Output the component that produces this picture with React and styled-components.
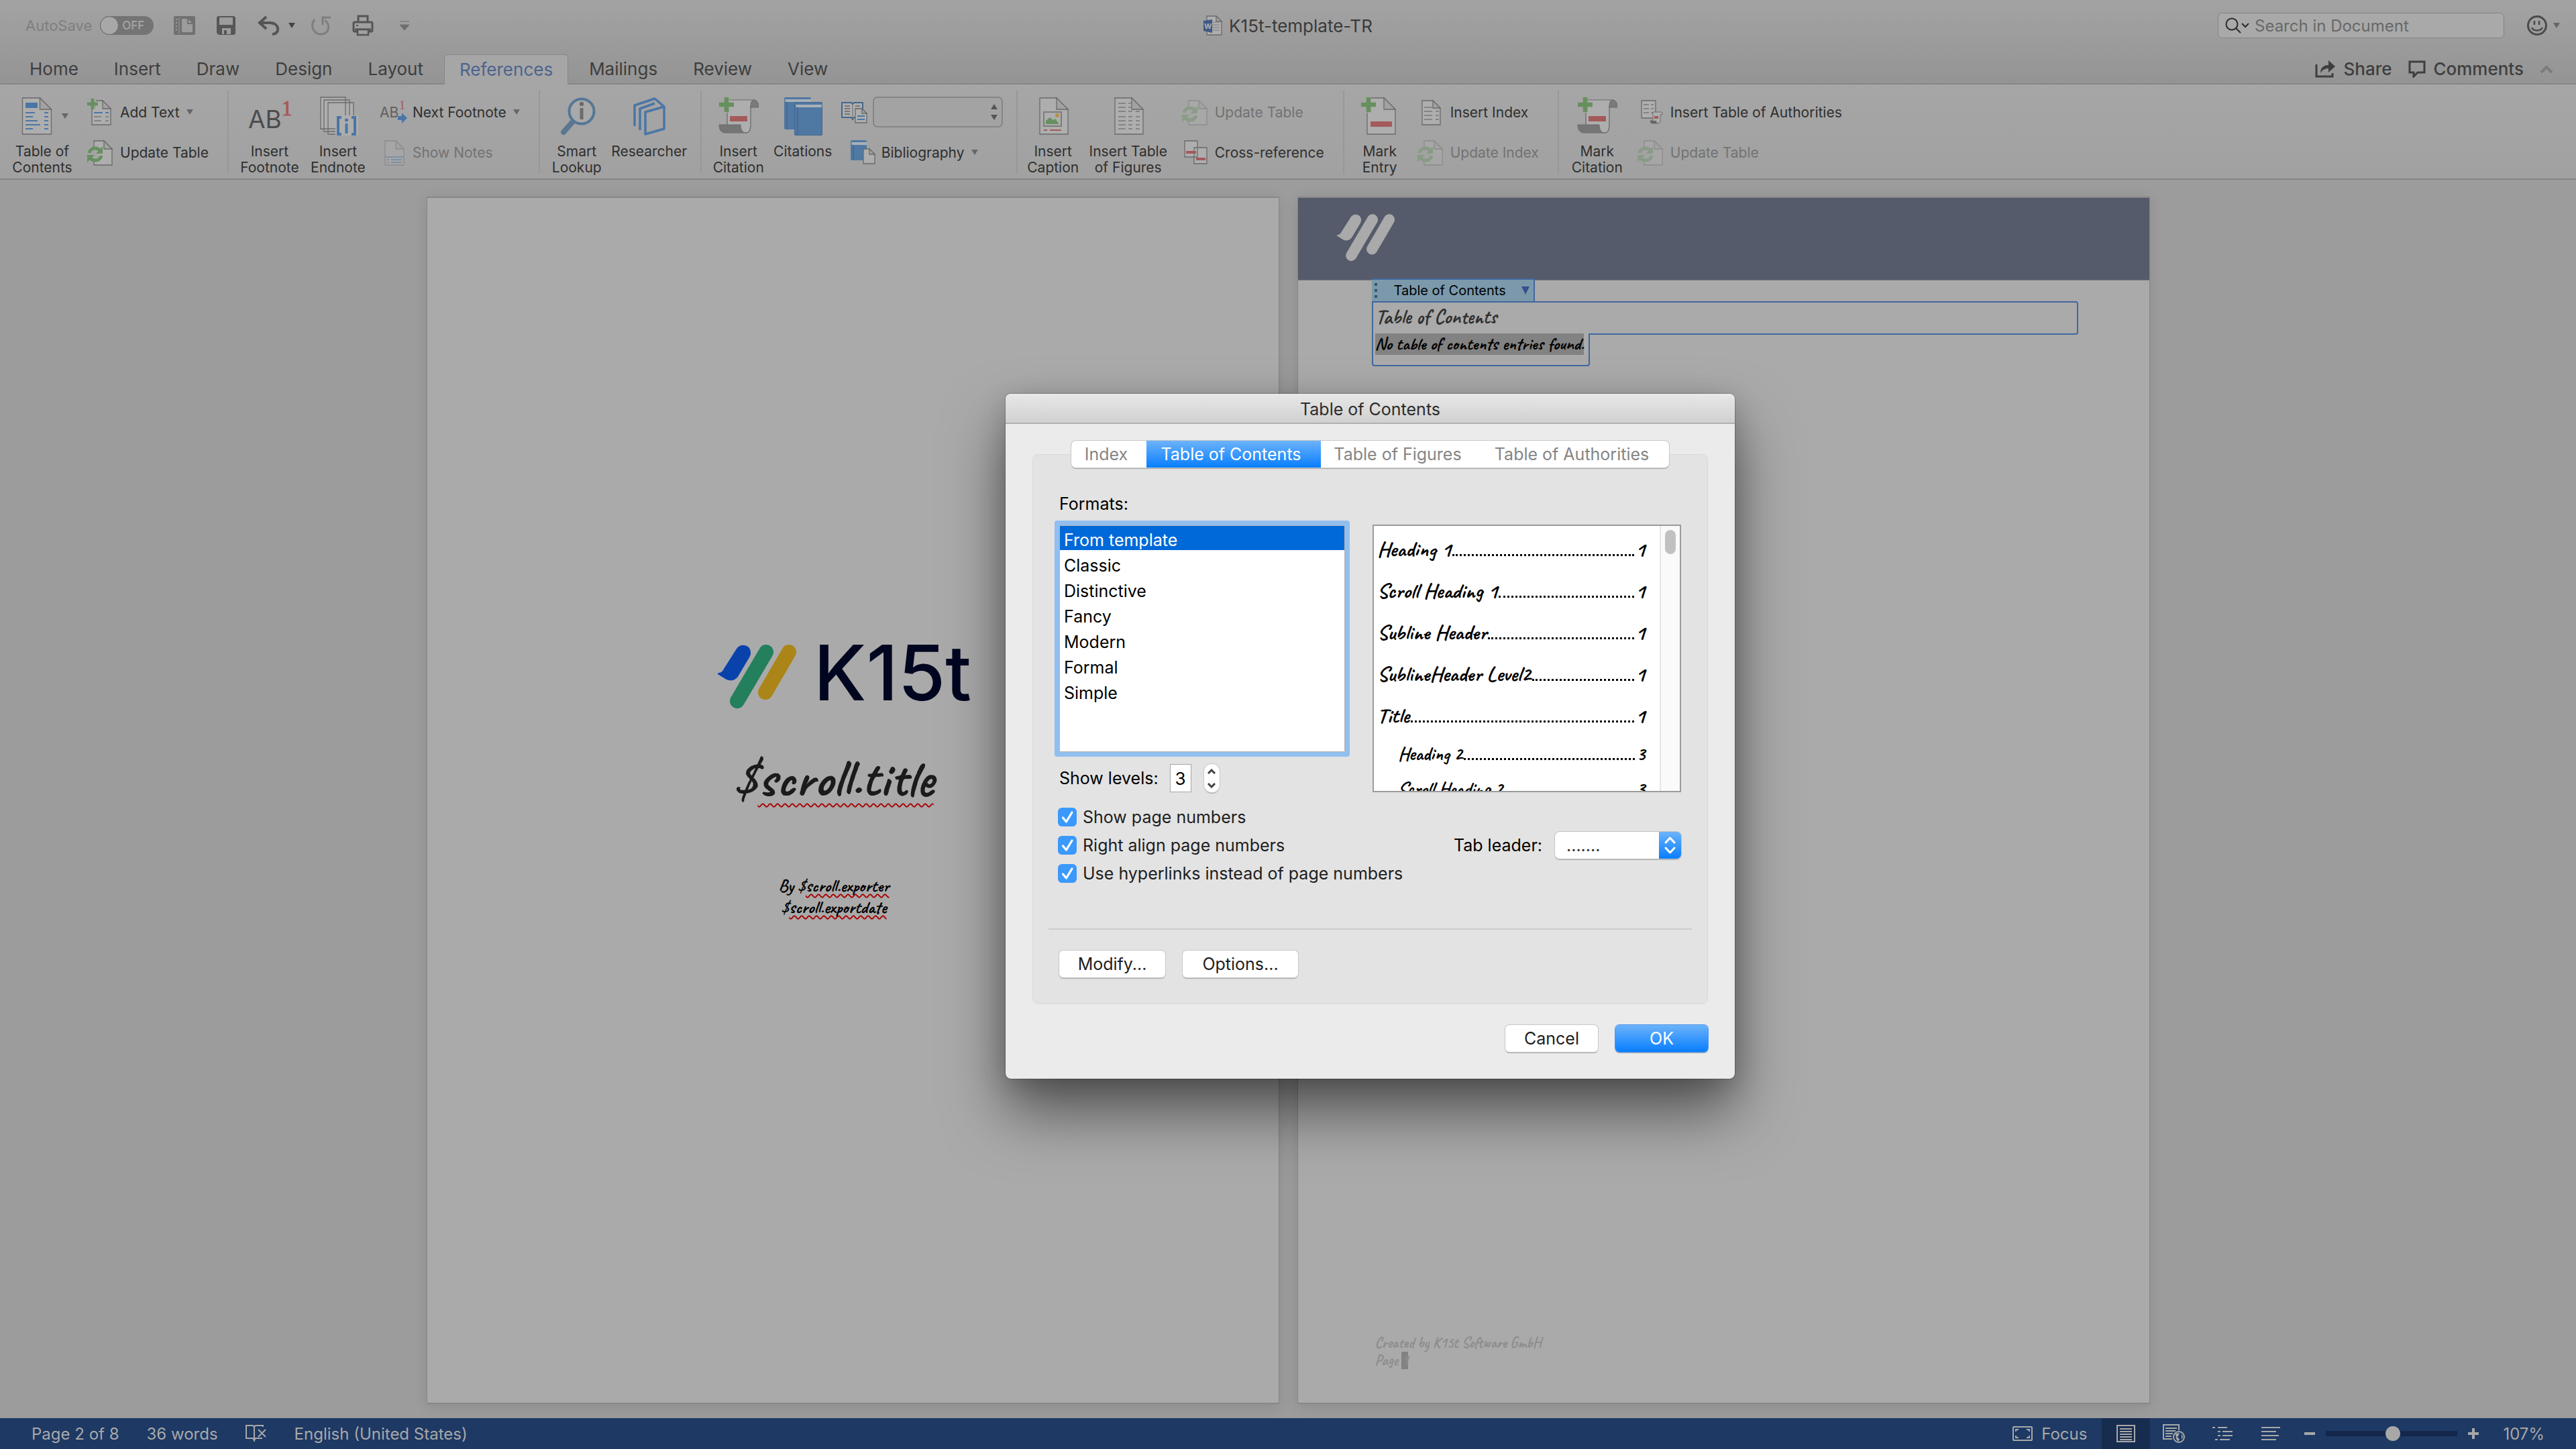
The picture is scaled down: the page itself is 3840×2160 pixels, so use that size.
import React, { useState } from "react";
import styled, { createGlobalStyle, css } from "styled-components";

const UI = `"Inter", "Liberation Sans", sans-serif`;
const SCRIPT = `"Caveat", "Liberation Sans Narrow", "Lato", sans-serif`;

const BLUE = "#4a76a6";
const GREEN = "#66905f";
const RED = "#a45a5a";
const LINE = "#6a6a6a";
const PAPER = "#aeaeae";

const GlobalStyle = createGlobalStyle`
  *, *::before, *::after {
    box-sizing: border-box;
  }
  body {
    margin: 0;
    background: #9c9c9c;
    font-family: ${UI};
    color: #333333;
  }
  button, input, select {
    font-family: inherit;
    font-size: inherit;
    color: inherit;
    margin: 0;
  }
  button {
    border: 0;
    padding: 0;
    background: none;
  }
  svg {
    display: block;
    flex: none;
  }
  ul, h1, h2, p {
    margin: 0;
    padding: 0;
    list-style: none;
    font-size: inherit;
    font-weight: inherit;
  }
`;

const Window = styled.div`
  position: relative;
  min-height: 100vh;
  display: flex;
  flex-direction: column;
  overflow: hidden;
`;

//---------------- title bar ----------------

const Chrome = styled.header`
  background: linear-gradient(#a3a3a3, #949494);
`;

const TitleBar = styled.div`
  height: 81px;
  padding: 0 24px 5px;
  display: grid;
  grid-template-columns: 1fr auto 1fr;
  align-items: center;
`;

const QuickAccess = styled.div`
  padding-left: 14px;
  display: flex;
  align-items: center;
  gap: 30px;
  color: #555555;
  button {
    display: flex;
  }
`;

const AutoSave = styled.div`
  display: flex;
  align-items: center;
  gap: 12px;
  font-size: 22px;
  color: #7f7f7f;
`;

const Toggle = styled.button`
  width: 80px;
  height: 28px;
  border-radius: 14px;
  background: #747474;
  align-items: center;
  gap: 5px;
  font-size: 17px;
  font-weight: 500;
  color: #a6a6a6;
  &::before {
    content: "";
    width: 28px;
    height: 28px;
    border-radius: 50%;
    background: #a8a8a8;
    border: 1px solid #6c6c6c;
  }
`;

const UndoButton = styled.button`
  margin-right: -8px;
`;

const DocTitle = styled.h1`
  display: flex;
  align-items: center;
  gap: 10px;
  font-size: 26px;
  color: #3a3a3a;
`;

const TitleTools = styled.div`
  display: flex;
  justify-content: flex-end;
  align-items: center;
  gap: 33px;
  color: #4a4a4a;
`;

const SearchBox = styled.label`
  width: 427px;
  height: 38px;
  padding: 0 10px;
  display: flex;
  align-items: center;
  gap: 8px;
  border: 1px solid #848484;
  border-radius: 6px;
  background: #a9a9a9;
  font-size: 24px;
  input {
    flex: 1;
    min-width: 0;
    border: 0;
    padding: 0;
    outline: 0;
    background: none;
  }
  input::placeholder {
    color: #686868;
    opacity: 1;
  }
`;

const TabRow = styled.nav`
  height: 45px;
  padding: 0 34px 0 22px;
  display: flex;
  align-items: stretch;
  gap: 9px;
  font-size: 26px;
  box-shadow: inset 0 -2px #868686;
`;

const RibbonTab = styled.button`
  padding: 0 22px 2px;
  color: #3e3e3e;
  ${p =>
    p.$active &&
    css`
      color: #4d648f;
      background: #a6a6a6;
      border: 1px solid #868686;
      border-bottom: 0;
      border-radius: 5px 5px 0 0;
    `}
`;

const TabTools = styled.div`
  margin-left: auto;
  display: flex;
  align-items: center;
  gap: 24px;
  padding-bottom: 2px;
  color: #3e3e3e;
  button {
    display: flex;
    align-items: center;
    gap: 12px;
    font-weight: 500;
  }
`;

//---------------- ribbon ----------------

const RibbonBar = styled.div`
  height: 142px;
  padding: 9px 0 7px;
  display: flex;
  background: linear-gradient(#a6a6a6, #a1a1a1);
  border-bottom: 2px solid #868686;
  font-size: 21px;
  line-height: 24px;
`;

const Group = styled.div`
  display: flex;
  padding: 0 ${p => p.$right || 0}px 0 ${p => p.$left || 18}px;
  gap: ${p => p.$gap || 15}px;
  border-right: ${p => (p.$last ? 0 : 2)}px solid #989898;
`;

const BigButton = styled.button`
  width: ${p => p.$width}px;
  padding-top: 9px;
  display: flex;
  flex-direction: column;
  align-items: center;
  justify-content: flex-start;
  gap: 12px;
  line-height: 24px;
  text-align: center;
  white-space: pre-line;
  color: #2f2f2f;
`;

const Stack = styled.div`
  padding: 12px 0;
  margin-left: ${p => p.$indent || 0}px;
  display: flex;
  flex-direction: column;
  align-items: flex-start;
  gap: 20px;
`;

const SmallButton = styled.button`
  height: 40px;
  margin-left: ${p => p.$indent || 0}px;
  display: flex;
  align-items: center;
  gap: 10px;
  white-space: nowrap;
  color: ${p => (p.disabled ? "#727272" : "#2f2f2f")};
  > svg:first-child {
    opacity: ${p => (p.disabled ? 0.4 : 1)};
  }
`;

const StyleRow = styled.div`
  height: 40px;
  display: flex;
  align-items: center;
  gap: 8px;
`;

const StyleSelect = styled.select`
  width: 194px;
  height: 46px;
  appearance: none;
  border: 2px solid #868686;
  border-radius: 7px;
  background: url("data:image/svg+xml,%3Csvg xmlns='http://www.w3.org/2000/svg' width='12' height='26'%3E%3Cpath d='M6 1l5 8H1zM6 25l5-8H1z' fill='%23555'/%3E%3C/svg%3E")
    no-repeat right 5px center #a3a3a3;
`;

//---------------- document ----------------

const Canvas = styled.main`
  flex: 1;
  padding: 25px 24px 21px;
  display: flex;
  justify-content: center;
  gap: 27px;
  background: #9c9c9c;
`;

const Page = styled.section`
  flex: 0 1 1271px;
  display: flex;
  flex-direction: column;
  background: #aaaaaa;
  border: 2px solid #878787;
  border-width: 2px 1px;
  box-shadow: 0 4px 18px rgba(0, 0, 0, 0.1);
  font-family: ${SCRIPT};
  font-weight: 600;
`;

const Cover = styled.div`
  padding: 648px 56px 0 0;
  display: flex;
  flex-direction: column;
  align-items: center;
  color: #000000;
`;

const Brand = styled.div`
  display: flex;
  align-items: flex-start;
  gap: 26px;
  height: 120px;
  padding-left: 32px;
  font-family: ${UI};
  font-weight: 500;
  font-size: 114px;
  line-height: 120px;
  color: #000620;
  svg {
    margin-top: 18px;
  }
`;

const CoverTitle = styled.h2`
  margin-top: 57px;
  font-size: 78px;
  font-weight: 700;
  line-height: 80px;
  color: #1b1b1b;
`;

const CoverMeta = styled.p`
  margin-top: 105px;
  font-size: 26px;
  line-height: 32px;
  text-align: center;
`;

const Misspelled = styled.span`
  text-decoration: underline wavy #a80000 2px;
  text-underline-offset: ${p => p.$offset || 3}px;
  text-decoration-skip-ink: none;
`;

const PageHeader = styled.div`
  height: 123px;
  padding: 24px 58px;
  background: #555b6b;
  border-bottom: 1px solid #70747f;
`;

const PageBody = styled.div`
  flex: 1;
  padding: 0 106px 0 110px;
  margin-top: -3px;
`;

const FieldTag = styled.button`
  height: 34px;
  padding: 0 6px 0 4px;
  display: flex;
  align-items: center;
  gap: 23px;
  border-top: 2px solid #41679f;
  border-right: 2px solid #41679f;
  border-radius: 0 3px 0 0;
  background: #7b99ab;
  font-family: ${UI};
  font-size: 20px;
  color: #000000;
`;

const FieldTop = styled.div`
  height: 50px;
  padding: 0 4px;
  border: 2px solid #41679f;
  border-radius: 0 4px 4px 0;
  font-size: 30px;
  line-height: 42px;
  color: #303030;
`;

const FieldBottom = styled.div`
  width: 325px;
  height: 49px;
  margin-top: -2px;
  padding: 0 3px;
  border: 2px solid #41679f;
  border-top: 0;
  border-radius: 0 0 4px 4px;
  background: #aaaaaa;
  font-size: 26px;
  line-height: 32px;
  white-space: nowrap;
  color: #000000;
`;

const Selected = styled.span`
  display: inline-block;
  background: #828282;
`;

const PageFooter = styled.footer`
  padding: 0 115px 50px;
  font-size: 22px;
  line-height: 26px;
  color: #8d8d8d;
`;

//---------------- status bar ----------------

const StatusBar = styled.footer`
  height: 46px;
  padding: 0 47px;
  display: flex;
  align-items: center;
  gap: 41px;
  background: #1d3964;
  font-size: 24px;
  color: #a8a8a8;
`;

const StatusRight = styled.div`
  margin-left: auto;
  display: flex;
  align-items: center;
  align-self: stretch;
  > button {
    display: flex;
    align-items: center;
    gap: 13px;
  }
`;

const ViewButtons = styled.div`
  align-self: stretch;
  display: flex;
  margin: 0 14px 0 22px;
`;

const ViewButton = styled.button`
  width: 72px;
  display: flex;
  align-items: center;
  justify-content: center;
  background: ${p => (p.$active ? "#172d50" : "none")};
`;

const ZoomSlider = styled.input`
  width: 196px;
  height: 22px;
  margin: 0 16px;
  appearance: none;
  background: linear-gradient(#14274a, #14274a) center / 100% 8px no-repeat;
  &::-webkit-slider-thumb {
    appearance: none;
    width: 22px;
    height: 22px;
    border-radius: 50%;
    background: #a8a8a8;
  }
`;

const ZoomValue = styled.span`
  margin-left: 36px;
`;

//---------------- dialog ----------------

const Dialog = styled.section`
  position: absolute;
  top: 587px;
  left: calc(50% - 421px);
  width: 1087px;
  background: #ebebeb;
  border-radius: 8px;
  font-size: 25px;
  line-height: 30px;
  color: #000000;
  box-shadow: 0 0 2px rgba(0, 0, 0, 0.6), 0 50px 90px rgba(0, 0, 0, 0.5),
    0 10px 40px rgba(0, 0, 0, 0.18);
`;

const DialogTitle = styled.h2`
  height: 45px;
  line-height: 47px;
  text-align: center;
  color: #2c2c2c;
  border-radius: 8px 8px 0 0;
  border-bottom: 2px solid #b2b2b2;
  background: linear-gradient(#e8e8e8, #d0d0d0);
`;

const DialogBody = styled.div`
  padding: 25px 40px 40px;
`;

const Segments = styled.div`
  position: relative;
  width: 891px;
  height: 40px;
  margin: 0 auto -20px;
  display: grid;
  grid-template-columns: 112px 260px 237px 1fr;
  border-radius: 7px;
  background: #ffffff;
  box-shadow: 0 0 0 1px #c6c6c6, 0 2px 1px #a8a8a8;
`;

const Segment = styled.button`
  padding-right: 8px;
  color: ${p => (p.$active ? "#ffffff" : "#858585")};
  background: ${p => (p.$active ? "linear-gradient(#6cb3fa, #087eff)" : "none")};
  & + & {
    border-left: ${p => (p.$active ? 0 : 2)}px solid #e2e2e2;
  }
`;

const Panel = styled.div`
  height: 820px;
  padding: 58px 23px 38px;
  display: flex;
  flex-direction: column;
  background: #e3e3e3;
  border: 1px solid #dadada;
  border-radius: 8px;
`;

const Columns = styled.div`
  padding: 0 16px;
  display: flex;
  justify-content: space-between;
`;

const FormatList = styled.ul`
  width: 426px;
  height: 338px;
  margin-top: 17px;
  border: 1px solid #b4b4b4;
  background: #ffffff;
  box-shadow: 0 0 0 7px #91bfef;
  border-radius: 1px;
`;

const FormatItem = styled.li`
  height: ${p => (p.$active ? 36 : 38)}px;
  padding: ${p => (p.$active ? 6 : 8)}px 6px 0;
  color: ${p => (p.$active ? "#ffffff" : "#000000")};
  background: ${p => (p.$active ? "#0069d9" : "none")};
`;

const Preview = styled.div`
  width: 460px;
  height: 399px;
  margin-top: 46px;
  display: flex;
  border: 2px solid #9b9b9b;
  background: #ffffff;
  overflow: hidden;
`;

const PreviewLines = styled.div`
  flex: 1;
  padding: 4px 22px 0 5px;
  font-family: ${SCRIPT};
  font-weight: 600;
`;

const PreviewLine = styled.div`
  display: flex;
  align-items: baseline;
  gap: 2px;
  padding-left: ${p => (p.$level - 1) * 31}px;
  font-size: ${p => (p.$level === 1 ? 32 : 28)}px;
  line-height: ${p => (p.$level === 1 ? 62 : 52)}px;
  &::before {
    content: "";
    order: 1;
    flex: 1;
    border-bottom: 3px dotted #000000;
  }
  span:last-child {
    order: 2;
  }
`;

const PreviewScroll = styled.div`
  width: 30px;
  padding: 6px;
  border-left: 2px solid #e6e6e6;
  background: #fafafa;
  &::before {
    content: "";
    display: block;
    width: 16px;
    height: 36px;
    border-radius: 8px;
    background: #c1c1c1;
  }
`;

const LevelRow = styled.div`
  margin-top: 18px;
  display: flex;
  align-items: center;
`;

const LevelInput = styled.input`
  width: 32px;
  height: 42px;
  margin: 0 19px 0 17px;
  padding: 0;
  border: 1px solid #a6a6a6;
  background: #ffffff;
  text-align: center;
  font-size: 26px;
`;

const Stepper = styled.div`
  width: 23px;
  height: 42px;
  border-radius: 11px;
  background: #ffffff;
  box-shadow: 0 0 0 1px #c8c8c8, 0 2px 1px #b0b0b0;
  display: grid;
  place-items: center;
  color: #444444;
  button {
    display: flex;
  }
`;

const Settings = styled.div`
  padding: 0 16px 0 14px;
  margin-top: 22px;
  display: flex;
  justify-content: space-between;
  align-items: center;
`;

const Checks = styled.div`
  display: flex;
  flex-direction: column;
  gap: 12px;
`;

const Check = styled.label`
  display: flex;
  align-items: center;
  gap: 9px;
  color: #1e1e1e;
  input {
    width: 28px;
    height: 28px;
    margin: 1px 0;
    appearance: none;
    border-radius: 6px;
    background: #ffffff;
  }
  input:checked {
    background: url("data:image/svg+xml,%3Csvg xmlns='http://www.w3.org/2000/svg' viewBox='0 0 28 28'%3E%3Cpath d='M7.500 15l5 6L21 7' fill='none' stroke='%23fff' stroke-width='3.200' stroke-linecap='round' stroke-linejoin='round'/%3E%3C/svg%3E")
      #3b99fc;
  }
`;

const Leader = styled.label`
  display: flex;
  align-items: center;
  gap: 19px;
  select {
    width: 188px;
    height: 40px;
    padding: 0 17px;
    appearance: none;
    border: 0;
    border-radius: 7px;
    color: #222222;
    background: url("data:image/svg+xml,%3Csvg xmlns='http://www.w3.org/2000/svg' width='33' height='40'%3E%3Cpath d='M10 16l6.500-7 6.500 7M10 24l6.500 7 6.500-7' fill='none' stroke='%23fff' stroke-width='3' stroke-linecap='round' stroke-linejoin='round'/%3E%3C/svg%3E")
        right center no-repeat,
      linear-gradient(#6cb3fa, #087eff) right / 33px 100% no-repeat, #ffffff;
    box-shadow: 0 0 0 1px #c4c4c4, 0 2px 1px #a8a8a8;
  }
`;

const Divider = styled.hr`
  width: 100%;
  height: 2px;
  margin: 67px 0 31px;
  border: 0;
  flex: none;
  background: #cccccc;
`;

const ButtonRow = styled.div`
  display: flex;
  gap: 26px;
  padding: 0 16px;
  ${p =>
    p.$end &&
    css`
      justify-content: flex-end;
      padding: 0;
      margin-top: 31px;
    `}
`;

const PushButton = styled.button`
  width: ${p => p.$width}px;
  height: 40px;
  border-radius: 6px;
  color: ${p => (p.$primary ? "#ffffff" : "#1e1e1e")};
  background: ${p => (p.$primary ? "linear-gradient(#6cb3fa, #087eff)" : "#ffffff")};
  box-shadow: 0 0 0 1px ${p => (p.$primary ? "#4a94ee" : "#c8c8c8")}, 0 2px 1px #a8a8a8;
`;

//---------------- icons ----------------

const Triangle = ({ color = "#666666" }) => (
  <svg width="10" height="8" viewBox="0 0 10 8">
    <path d="M0 0h10L5 8z" fill={color} />
  </svg>
);

// sheet of paper with the top right corner folded
const Sheet = ({ x, y, w, h, fold }) => (
  <g fill={PAPER} stroke={LINE} strokeWidth="1.300">
    <path d={`M${x} ${y}h${w - fold}l${fold} ${fold}v${h - fold}h${-w}z`} />
    <path d={`M${x + w - fold} ${y}v${fold}h${fold}z`} fill="#a2a2a2" />
  </g>
);

const Plus = ({ s = 22, x = 1, y = 1 }) => {
  const t = s * 0.3;
  const o = (s - t) / 2;
  return (
    <path
      d={`M${x + o} ${y}h${t}v${o}h${o}v${t}h${-o}v${o}h${-t}v${-o}h${-o}v${-t}h${o}z`}
      fill={GREEN}
    />
  );
};

const Rows = ({ ys, cols, color = BLUE, w = 2 }) => (
  <path
    d={ys.map(y => cols.map(([a, b]) => `M${a} ${y}H${b}`).join("")).join("")}
    stroke={color}
    strokeWidth={w}
    fill="none"
  />
);

const Big = ({ w = 60, children }) => (
  <svg width={w} height="58" viewBox={`0 0 ${w} 58`}>
    {children}
  </svg>
);

const Small = ({ children }) => (
  <svg width="40" height="40" viewBox="0 0 40 40" overflow="visible">
    {children}
  </svg>
);

const TocIcon = () => (
  <Big w={78}>
    <Sheet x={9.5} y={2} w={43} h={54} fold={17} />
    <path d="M14 9h18v8H14z" fill={BLUE} />
    <path
      d="M14 24h14M14 30h11M14 36h18M14 42h22M14 48h11M42 24h6M42 30h6M42 36h6M42 42h6M42 48h6"
      stroke={BLUE}
      strokeWidth="2"
    />
    <path d="M68 25h10l-5 8z" fill="#666666" />
  </Big>
);

const FootnoteIcon = () => (
  <Big w={66}>
    <text x="1" y="47" fontFamily="Inter" fontSize="37" fill="#4c4c4c">
      AB
    </text>
    <text x="51" y="28" fontFamily="Liberation Serif" fontSize="31" fill={RED} stroke={RED}>
      1
    </text>
  </Big>
);

const EndnoteIcon = () => (
  <Big>
    <g fill={PAPER} stroke={LINE} strokeWidth="1.300">
      <path d="M4 1h37v47H4zM9 5h38v47H9zM15 9h38v47H15z" />
    </g>
    <path d="M26 28h34v30H26z" fill={PAPER} />
    <path
      d="M35 31h-5v25h5M50 31h5v25h-5M42.500 40v15"
      fill="none"
      stroke={BLUE}
      strokeWidth="4"
    />
    <circle cx="42.500" cy="35" r="2.500" fill={BLUE} />
  </Big>
);

const LookupIcon = () => (
  <Big>
    <path d="M25 36L10 53" stroke="#5b7690" strokeWidth="8" strokeLinecap="round" />
    <circle cx="37" cy="22" r="18.500" fill="#a9a9a9" stroke="#547797" strokeWidth="4" />
    <circle cx="37" cy="11" r="3.200" fill="#6c6c6c" />
    <path d="M37 17v17" stroke="#6c6c6c" strokeWidth="5" />
  </Big>
);

const ResearchIcon = () => (
  <Big>
    <path
      d="M8 44V13L38 3l14 12v33L24 56V23l28-8M16 50V18l22-8"
      fill="none"
      stroke={BLUE}
      strokeWidth="3.500"
      strokeLinejoin="round"
    />
  </Big>
);

const ScrollIcon = () => (
  <Big>
    <path d="M13 42V5h36v37c0 8-2 12-6 12H8l5-12z" fill={PAPER} />
    <path d="M16 5h37c5 0 7 5 7 11H48c0-6 1-11 5-11" fill="#7a7a7a" stroke={LINE} />
    <path d="M13 24v18M48 14v28c0 7-2 12-7 12" fill="none" stroke={LINE} strokeWidth="1.300" />
    <path d="M1 42h32c0 6 2 12 8 12H10C4 54 1 49 1 42z" fill="#757575" stroke={LINE} />
    <path d="M17 29h26v8H17z" fill={RED} />
    <path d="M0 0h16v24H0z" fill="#a5a5a5" />
    <Plus />
  </Big>
);

const Book = ({ x, y, w, h }) => (
  <g>
    <rect x={x} y={y} width={w} height={h} rx="2" fill="#4f78a3" />
    <path d={`M${x + 1} ${y + 3}h${w - 1}v4h${-w + 2}z`} fill="#a9b0b8" />
    <path d={`M${x + 4} ${y + 7}v${h - 7}`} stroke="#41678f" strokeWidth="1.500" />
  </g>
);

const CitationsIcon = () => (
  <Big>
    <Book x={2} y={1} w={40} h={48} />
    <rect x="17" y="8" width="42" height="50" rx="2" fill="#41678f" />
    <Book x={18} y={9} w={40} h={48} />
  </Big>
);

const CaptionIcon = () => (
  <Big>
    <Sheet x={10} y={2} w={42} h={54} fold={17} />
    <rect x="16" y="23" width="26" height="21" fill={PAPER} stroke="#7c7c7c" strokeWidth="2" />
    <path d="M19 41v-5l6-5 5 4 3-2 6 8z" fill={GREEN} />
    <circle cx="36" cy="28" r="3" fill="#b0914a" />
    <path d="M16 50h5M25 50h17" stroke={RED} strokeWidth="2" />
  </Big>
);

const FiguresIcon = () => (
  <Big>
    <Sheet x={10} y={2} w={42} h={54} fold={17} />
    <Rows ys={[10, 16]} cols={[[15, 26], [30, 35]]} color="#858585" />
    <Rows ys={[22, 30, 36, 42, 48]} cols={[[15, 26], [30, 36], [41, 47]]} color="#858585" />
  </Big>
);

const MarkEntryIcon = () => (
  <Big>
    <Sheet x={11} y={2} w={42} h={54} fold={17} />
    <path d="M16 37h32v8H16z" fill={RED} />
    <path d="M0 0h17v24H0z" fill="#a5a5a5" />
    <Plus x={2} />
  </Big>
);

const AddTextIcon = () => (
  <Small>
    <Sheet x={8} y={3} w={28} h={36} fold={12} />
    <Rows ys={[21]} cols={[[11, 24], [28, 33]]} />
    <Rows ys={[27, 33]} cols={[[11, 22], [28, 33]]} color="#858585" />
    <path d="M0 -1h14v17H0z" fill="#a5a5a5" />
    <Plus s={16} x={1} y={0} />
  </Small>
);

const UpdateIcon = () => (
  <Small>
    <Sheet x={11} y={3} w={27} h={36} fold={12} />
    <path d="M2 12h16v22H2z" fill="#a5a5a5" />
    <g fill="none" stroke={GREEN} strokeWidth="5">
      <path d="M4 21c2-8 11-9 16-4" />
      <path d="M22 25c-2 8-11 9-16 4" />
    </g>
    <path d="M24 11v11H14zM1 35V24h11z" fill={GREEN} />
  </Small>
);

const NextFootnoteIcon = () => (
  <Small>
    <text x="1" y="28" fontFamily="Inter" fontSize="21" fill="#5f5f5f">
      AB
    </text>
    <text x="30" y="16" fontFamily="Liberation Serif" fontSize="18" fill={RED}>
      1
    </text>
    <path d="M28 26h6v-5l8 8-8 8v-5h-6z" fill={BLUE} />
  </Small>
);

const NotesIcon = () => (
  <Small>
    <Sheet x={9} y={3} w={28} h={36} fold={12} />
    <path d="M9 27h28M12 31h3M12 35h3M18 31h16M18 35h16" stroke={BLUE} strokeWidth="2" />
  </Small>
);

const StyleIcon = () => (
  <svg width="39" height="34" viewBox="0 0 39 34">
    <path d="M1 3h14l2 2 2-2h13v22H19l-2 3-2-3H1z" fill={PAPER} stroke="#42688f" strokeWidth="2" />
    <path d="M17 5v22" stroke={LINE} />
    <Rows ys={[8, 12, 16, 20]} cols={[[5, 13], [21, 28]]} color="#777777" />
    <Sheet x={21} y={12} w={17} h={21} fold={7} />
    <Rows ys={[23, 28]} cols={[[24, 35]]} />
  </svg>
);

const BibliographyIcon = () => (
  <Small>
    <Book x={4} y={2} w={24} h={30} />
    <Sheet x={23} y={15} w={17} h={22} fold={8} />
  </Small>
);

const CrossRefIcon = () => (
  <Small>
    <path
      d="M5 3h19v24H5zM19 13h19v24H19z"
      fill={PAPER}
      stroke={LINE}
      strokeWidth="1.300"
    />
    <path d="M7 18h15v4H7zM22 28h14v4H22z" fill={RED} />
  </Small>
);

const IndexIcon = () => (
  <Small>
    <Sheet x={8} y={3} w={27} h={36} fold={11} />
    <Rows ys={[13, 19, 25, 31]} cols={[[11, 23]]} color="#858585" />
    <Rows ys={[19, 25, 31]} cols={[[28, 33]]} color="#858585" />
  </Small>
);

const AuthoritiesIcon = () => (
  <Small>
    <path d="M7 3h21v26H7z" fill={PAPER} stroke={LINE} strokeWidth="1.300" />
    <Rows ys={[9, 15, 21]} cols={[[10, 18], [21, 25]]} color="#858585" />
    <path d="M24 20h12c2 0 2 2 2 4h-3v8c0 3-1 5-4 5h-8c-2 0-3-2-3-4h4z" fill={PAPER} stroke={LINE} />
    <path d="M20 33h9c0 2 1 4 3 4h-9c-2 0-3-2-3-4z" fill="#666666" />
    <path d="M26 26h6v4h-6z" fill={RED} />
  </Small>
);

const BarsMark = ({ w, h, colors }) => (
  <svg width={w} height={h} viewBox="0 0 117 96">
    <g strokeWidth="22" strokeLinecap="round">
      <path d="M72 11L29 84" stroke={colors[1]} />
      <path d="M106 11L71 71" stroke={colors[2]} />
    </g>
    <path
      d="M28 6C34-3 50 0 49 13c0 2-1 4-2 6L31 46c-4 7-11 9-18 6L0 44v-2c5 0 7-2 9-6z"
      fill={colors[0]}
    />
  </svg>
);

const icon = { fill: "none", stroke: "currentColor", strokeWidth: 3 };

//---------------- sections ----------------

const TopBar = () => (
  <TitleBar>
    <QuickAccess>
      <AutoSave>
        <span>AutoSave</span>
        <Toggle role="switch" aria-checked="false" aria-label="AutoSave">
          OFF
        </Toggle>
      </AutoSave>
      <button aria-label="Sidebar">
        <svg width="32" height="28" viewBox="0 0 32 28">
          <rect width="32" height="28" rx="2" fill="#717171" />
          <path d="M4 4v20" stroke="#9c9c9c" strokeWidth="2" strokeDasharray="2 3" />
          <path d="M8 2v24" stroke="#9c9c9c" />
          <path d="M12 4h9l7 7v13H12z" fill="#9c9c9c" />
          <path d="M21 4v7h7" fill="none" stroke="#717171" strokeWidth="2" />
        </svg>
      </button>
      <button aria-label="Save">
        <svg width="32" height="28" viewBox="0 0 32 28">
          <path d="M4 0h24l2 2v24l-2 2H5l-3-3V2z" fill="#565656" />
          <path d="M6 2h20v11H6z" fill="#9c9c9c" />
          <path d="M10 18h13v9H10z" fill="#9c9c9c" />
          <path d="M13 21h4v7h-4z" fill="#565656" />
        </svg>
      </button>
      <UndoButton aria-label="Undo">
        <svg width="58" height="30" viewBox="0 0 58 30">
          <path d="M14 2L4 11l10 9M5 11h15c15 1 14 17 3 17" {...icon} strokeWidth="4" />
          <path d="M47 11h10l-5 8z" fill="#444444" />
        </svg>
      </UndoButton>
      <button aria-label="Redo">
        <svg width="32" height="30" viewBox="0 0 32 30">
          <path d="M6 6C-2 17 6 28 15 28c12 0 16-13 6-21M18 14V3h12" {...icon} stroke="#7f7f7f" />
        </svg>
      </button>
      <button aria-label="Print">
        <svg width="32" height="32" viewBox="0 0 32 32">
          <path d="M9 11V2h14v9" {...icon} />
          <rect x="2" y="11" width="28" height="14" rx="2" {...icon} />
          <path d="M4 22h24" {...icon} />
          <path d="M8 22h16v8H8z" fill="#a0a0a0" stroke="currentColor" strokeWidth="2.500" />
          <path d="M6 16h3" {...icon} strokeWidth="2" />
        </svg>
      </button>
      <button aria-label="Customize toolbar">
        <svg width="32" height="16" viewBox="0 0 32 16">
          <path d="M9 2h14M9 7h14l-7 8z" fill="#6e6e6e" stroke="#6e6e6e" />
        </svg>
      </button>
    </QuickAccess>
    <DocTitle>
      <svg width="28" height="30" viewBox="0 0 28 30">
        <Sheet x={5} y={1} w={22} h={28} fold={8} />
        <Rows ys={[10, 14, 18, 22]} cols={[[13, 24]]} color="#7c7c7c" w={1} />
        <path d="M0 8l13-2v20L0 23z" fill="#3f5985" />
        <text x="1" y="20" fontFamily="Inter" fontSize="11" fontWeight="700" fill="#b0b0b0">
          W
        </text>
      </svg>
      K15t-template-TR
    </DocTitle>
    <TitleTools>
      <SearchBox>
        <svg width="36" height="24" viewBox="0 0 36 24">
          <g fill="none" stroke="#2a2a2a" strokeWidth="2">
            <circle cx="10" cy="10" r="8.500" />
            <path d="M16 16l7 7M25 9l5 5 5-5" />
          </g>
        </svg>
        <input type="search" placeholder="Search in Document" aria-label="Search in Document" />
      </SearchBox>
      <svg width="50" height="32" viewBox="0 0 50 32">
        <circle cx="16" cy="16" r="13.500" {...icon} />
        <path d="M12 9v6M19 9v6M8 19c3 6 13 6 16 0" {...icon} strokeWidth="2.500" />
        <path d="M40 12h10l-5 8z" fill="#666666" />
      </svg>
    </TitleTools>
  </TitleBar>
);

const TABS = [
  "Home",
  "Insert",
  "Draw",
  "Design",
  "Layout",
  "References",
  "Mailings",
  "Review",
  "View"
];

const Tabs = () => (
  <TabRow>
    {TABS.map(tab => (
      <RibbonTab key={tab} $active={tab === "References"}>
        {tab}
      </RibbonTab>
    ))}
    <TabTools>
      <button>
        <svg width="30" height="26" viewBox="0 0 30 26">
          <path d="M2 6v18h24v-5" {...icon} />
          <path d="M8 19C8 10 14 7 20 7V0l10 9-10 9v-6c-5 0-9 2-12 7z" fill="currentColor" />
        </svg>
        Share
      </button>
      <button>
        <svg width="26" height="26" viewBox="0 0 26 26">
          <path d="M2 2h22v16H14l-6 6v-6H2z" {...icon} />
        </svg>
        Comments
      </button>
      <button aria-label="Collapse ribbon">
        <svg width="20" height="14" viewBox="0 0 20 14">
          <path d="M2 12l8-8 8 8" {...icon} stroke="#7c7c7c" strokeWidth="4" />
        </svg>
      </button>
    </TabTools>
  </TabRow>
);

const Ribbon = () => (
  <RibbonBar>
    <Group $gap={21} $right={28}>
      <BigButton $width={90}>
        <TocIcon />
        {"Table of\nContents"}
      </BigButton>
      <Stack>
        <SmallButton>
          <AddTextIcon />
          Add Text
          <Triangle />
        </SmallButton>
        <SmallButton>
          <UpdateIcon />
          Update Table
        </SmallButton>
      </Stack>
    </Group>
    <Group $left={16} $right={28}>
      <BigButton $width={90}>
        <FootnoteIcon />
        {"Insert\nFootnote"}
      </BigButton>
      <BigButton $width={84}>
        <EndnoteIcon />
        {"Insert\nEndnote"}
      </BigButton>
      <Stack $indent={4}>
        <SmallButton>
          <NextFootnoteIcon />
          Next Footnote
          <Triangle />
        </SmallButton>
        <SmallButton disabled>
          <NotesIcon />
          Show Notes
        </SmallButton>
      </Stack>
    </Group>
    <Group $left={18} $right={20}>
      <BigButton $width={74}>
        <LookupIcon />
        {"Smart\nLookup"}
      </BigButton>
      <BigButton $width={112}>
        <ResearchIcon />
        Researcher
      </BigButton>
    </Group>
    <Group $left={16} $gap={12} $right={20}>
      <BigButton $width={78}>
        <ScrollIcon />
        {"Insert\nCitation"}
      </BigButton>
      <BigButton $width={90}>
        <CitationsIcon />
        Citations
      </BigButton>
      <Stack>
        <StyleRow>
          <StyleIcon />
          <StyleSelect aria-label="Bibliography style">
            <option />
          </StyleSelect>
        </StyleRow>
        <SmallButton $indent={10}>
          <BibliographyIcon />
          Bibliography
          <Triangle />
        </SmallButton>
      </Stack>
    </Group>
    <Group $left={14} $gap={13} $right={28}>
      <BigButton $width={78}>
        <CaptionIcon />
        {"Insert\nCaption"}
      </BigButton>
      <BigButton $width={120}>
        <FiguresIcon />
        {"Insert Table\nof Figures"}
      </BigButton>
      <Stack $indent={6}>
        <SmallButton disabled>
          <UpdateIcon />
          Update Table
        </SmallButton>
        <SmallButton>
          <CrossRefIcon />
          Cross-reference
        </SmallButton>
      </Stack>
    </Group>
    <Group $left={16} $gap={18} $right={28}>
      <BigButton $width={74}>
        <MarkEntryIcon />
        {"Mark\nEntry"}
      </BigButton>
      <Stack>
        <SmallButton>
          <IndexIcon />
          Insert Index
        </SmallButton>
        <SmallButton disabled>
          <UpdateIcon />
          Update Index
        </SmallButton>
      </Stack>
    </Group>
    <Group $gap={20} $last>
      <BigButton $width={78}>
        <ScrollIcon />
        {"Mark\nCitation"}
      </BigButton>
      <Stack>
        <SmallButton>
          <AuthoritiesIcon />
          Insert Table of Authorities
        </SmallButton>
        <SmallButton disabled>
          <UpdateIcon />
          Update Table
        </SmallButton>
      </Stack>
    </Group>
  </RibbonBar>
);

const Document = () => (
  <Canvas>
    <Page>
      <Cover>
        <Brand>
          <BarsMark w={117} h={96} colors={["#0a42ac", "#237f5c", "#ab8517"]} />
          K15t
        </Brand>
        <CoverTitle>
          $<Misspelled $offset={11}>scroll.title</Misspelled>
        </CoverTitle>
        <CoverMeta>
          By $<Misspelled>scroll.exporter</Misspelled>
          <br />$<Misspelled>scroll.exportdate</Misspelled>
        </CoverMeta>
      </Cover>
    </Page>
    <Page>
      <PageHeader>
        <BarsMark w={86} h={71} colors={["#aaaaaa", "#aaaaaa", "#aaaaaa"]} />
      </PageHeader>
      <PageBody>
        <FieldTag>
          <svg width="6" height="22" viewBox="0 0 6 22">
            <path d="M2 0v4M2 9v4M2 18v4" stroke="#33566b" strokeWidth="4" />
          </svg>
          Table of Contents
          <svg width="12" height="12" viewBox="0 0 12 12">
            <path d="M0 0h12L6 12z" fill="#34508f" />
          </svg>
        </FieldTag>
        <FieldTop>Table of Contents</FieldTop>
        <FieldBottom>
          <Selected>No table of contents entries found.</Selected>
        </FieldBottom>
      </PageBody>
      <PageFooter>
        <p>Created by K15t Software GmbH</p>
        <p>
          Page <Selected>1</Selected>
        </p>
      </PageFooter>
    </Page>
  </Canvas>
);

const Status = () => (
  <StatusBar>
    <span>Page 2 of 8</span>
    <span>36 words</span>
    <svg width="32" height="28" viewBox="0 0 32 28">
      <path
        d="M26 4V2H15l-2 2-2-2H1v19h10l2 3 2-3h10M13 4v22M19 8l11 11M30 8L19 19"
        fill="none"
        stroke="currentColor"
        strokeWidth="2"
      />
    </svg>
    <span>English (United States)</span>
    <StatusRight>
      <button>
        <svg width="30" height="22" viewBox="0 0 30 22">
          <rect x="1" y="1" width="28" height="20" rx="1" {...icon} strokeWidth="2" />
          <path d="M5 8V5h4M21 5h4v3M25 14v3h-4M9 17H5v-3" {...icon} strokeWidth="2" />
        </svg>
        Focus
      </button>
      <ViewButtons>
        <ViewButton $active aria-label="Print layout">
          <svg width="28" height="26" viewBox="0 0 28 26">
            <rect x="1" y="1" width="26" height="24" {...icon} strokeWidth="2" />
            <path d="M5 6h18M5 10h18M5 14h18M5 18h18M5 22h18" {...icon} strokeWidth="2" />
          </svg>
        </ViewButton>
        <ViewButton aria-label="Web layout">
          <svg width="34" height="28" viewBox="0 0 34 28">
            <path d="M24 9V1H1v21h13M4 6h17M4 10h15M4 14h11M4 18h9" {...icon} strokeWidth="2" />
            <circle cx="24" cy="19" r="8" {...icon} strokeWidth="2" />
            <path d="M19 14l6-1-2 5-2 1 4 3-2 4-3-4zM28 14l2 5-2 4z" fill="currentColor" />
          </svg>
        </ViewButton>
        <ViewButton aria-label="Outline">
          <svg width="30" height="20" viewBox="0 0 30 20">
            <path
              d="M0 1h4M8 1h14M8 7h4M15 7h15M8 13h4M15 13h15M4 19h4M11 19h15"
              {...icon}
              strokeWidth="2"
            />
          </svg>
        </ViewButton>
        <ViewButton aria-label="Draft">
          <svg width="28" height="20" viewBox="0 0 28 20">
            <path d="M0 1h28M0 7h22M0 13h26M0 19h22" {...icon} strokeWidth="2" />
          </svg>
        </ViewButton>
      </ViewButtons>
      <button aria-label="Zoom out">
        <svg width="16" height="16" viewBox="0 0 16 16">
          <path d="M0 8h16" {...icon} strokeWidth="4" />
        </svg>
      </button>
      <ZoomSlider type="range" min="0" max="100" defaultValue="51" aria-label="Zoom" />
      <button aria-label="Zoom in">
        <svg width="16" height="16" viewBox="0 0 16 16">
          <path d="M0 8h16M8 0v16" {...icon} strokeWidth="4" />
        </svg>
      </button>
      <ZoomValue>107%</ZoomValue>
    </StatusRight>
  </StatusBar>
);

const SEGMENTS = ["Index", "Table of Contents", "Table of Figures", "Table of Authorities"];
const FORMATS = ["From template", "Classic", "Distinctive", "Fancy", "Modern", "Formal", "Simple"];
const PREVIEW = [
  ["Heading 1", 1, 1],
  ["Scroll Heading 1", 1, 1],
  ["Subline Header", 1, 1],
  ["SublineHeader Level2", 1, 1],
  ["Title", 1, 1],
  ["Heading 2", 3, 2],
  ["Scroll Heading 2", 3, 2]
];
const OPTIONS = [
  "Show page numbers",
  "Right align page numbers",
  "Use hyperlinks instead of page numbers"
];

const TocDialog = () => {
  const [segment, setSegment] = useState("Table of Contents");
  const [format, setFormat] = useState("From template");
  const [levels, setLevels] = useState(3);

  return (
    <Dialog role="dialog" aria-labelledby="toc-title">
      <DialogTitle id="toc-title">Table of Contents</DialogTitle>
      <DialogBody>
        <Segments role="tablist">
          {SEGMENTS.map(name => (
            <Segment
              key={name}
              role="tab"
              aria-selected={name === segment}
              $active={name === segment}
              onClick={() => setSegment(name)}
            >
              {name}
            </Segment>
          ))}
        </Segments>
        <Panel>
          <Columns>
            <div>
              <div id="formats">Formats:</div>
              <FormatList role="listbox" aria-labelledby="formats">
                {FORMATS.map(name => (
                  <FormatItem
                    key={name}
                    role="option"
                    aria-selected={name === format}
                    $active={name === format}
                    onClick={() => setFormat(name)}
                  >
                    {name}
                  </FormatItem>
                ))}
              </FormatList>
              <LevelRow>
                <label htmlFor="levels">Show levels:</label>
                <LevelInput
                  id="levels"
                  value={levels}
                  onChange={e => setLevels(Number(e.target.value) || 1)}
                />
                <Stepper>
                  <button aria-label="More levels" onClick={() => setLevels(levels + 1)}>
                    <svg width="14" height="8" viewBox="0 0 14 8">
                      <path d="M2 7l5-5 5 5" {...icon} />
                    </svg>
                  </button>
                  <button aria-label="Fewer levels" onClick={() => setLevels(levels - 1)}>
                    <svg width="14" height="8" viewBox="0 0 14 8">
                      <path d="M2 1l5 5 5-5" {...icon} />
                    </svg>
                  </button>
                </Stepper>
              </LevelRow>
            </div>
            <Preview>
              <PreviewLines>
                {PREVIEW.map(([name, page, level]) => (
                  <PreviewLine key={name} $level={level}>
                    <span>{name}</span>
                    <span>{page}</span>
                  </PreviewLine>
                ))}
              </PreviewLines>
              <PreviewScroll />
            </Preview>
          </Columns>
          <Settings>
            <Checks>
              {OPTIONS.map(name => (
                <Check key={name}>
                  <input type="checkbox" defaultChecked />
                  {name}
                </Check>
              ))}
            </Checks>
            <Leader>
              Tab leader:
              <select>
                <option>.......</option>
              </select>
            </Leader>
          </Settings>
          <Divider />
          <ButtonRow>
            <PushButton $width={158}>Modify...</PushButton>
            <PushButton $width={172}>Options...</PushButton>
          </ButtonRow>
        </Panel>
        <ButtonRow $end>
          <PushButton $width={138}>Cancel</PushButton>
          <PushButton $width={138} $primary>
            OK
          </PushButton>
        </ButtonRow>
      </DialogBody>
    </Dialog>
  );
};

const App = () => (
  <>
    <GlobalStyle />
    <Window>
      <Chrome>
        <TopBar />
        <Tabs />
      </Chrome>
      <Ribbon />
      <Document />
      <Status />
      <TocDialog />
    </Window>
  </>
);

export default App;
